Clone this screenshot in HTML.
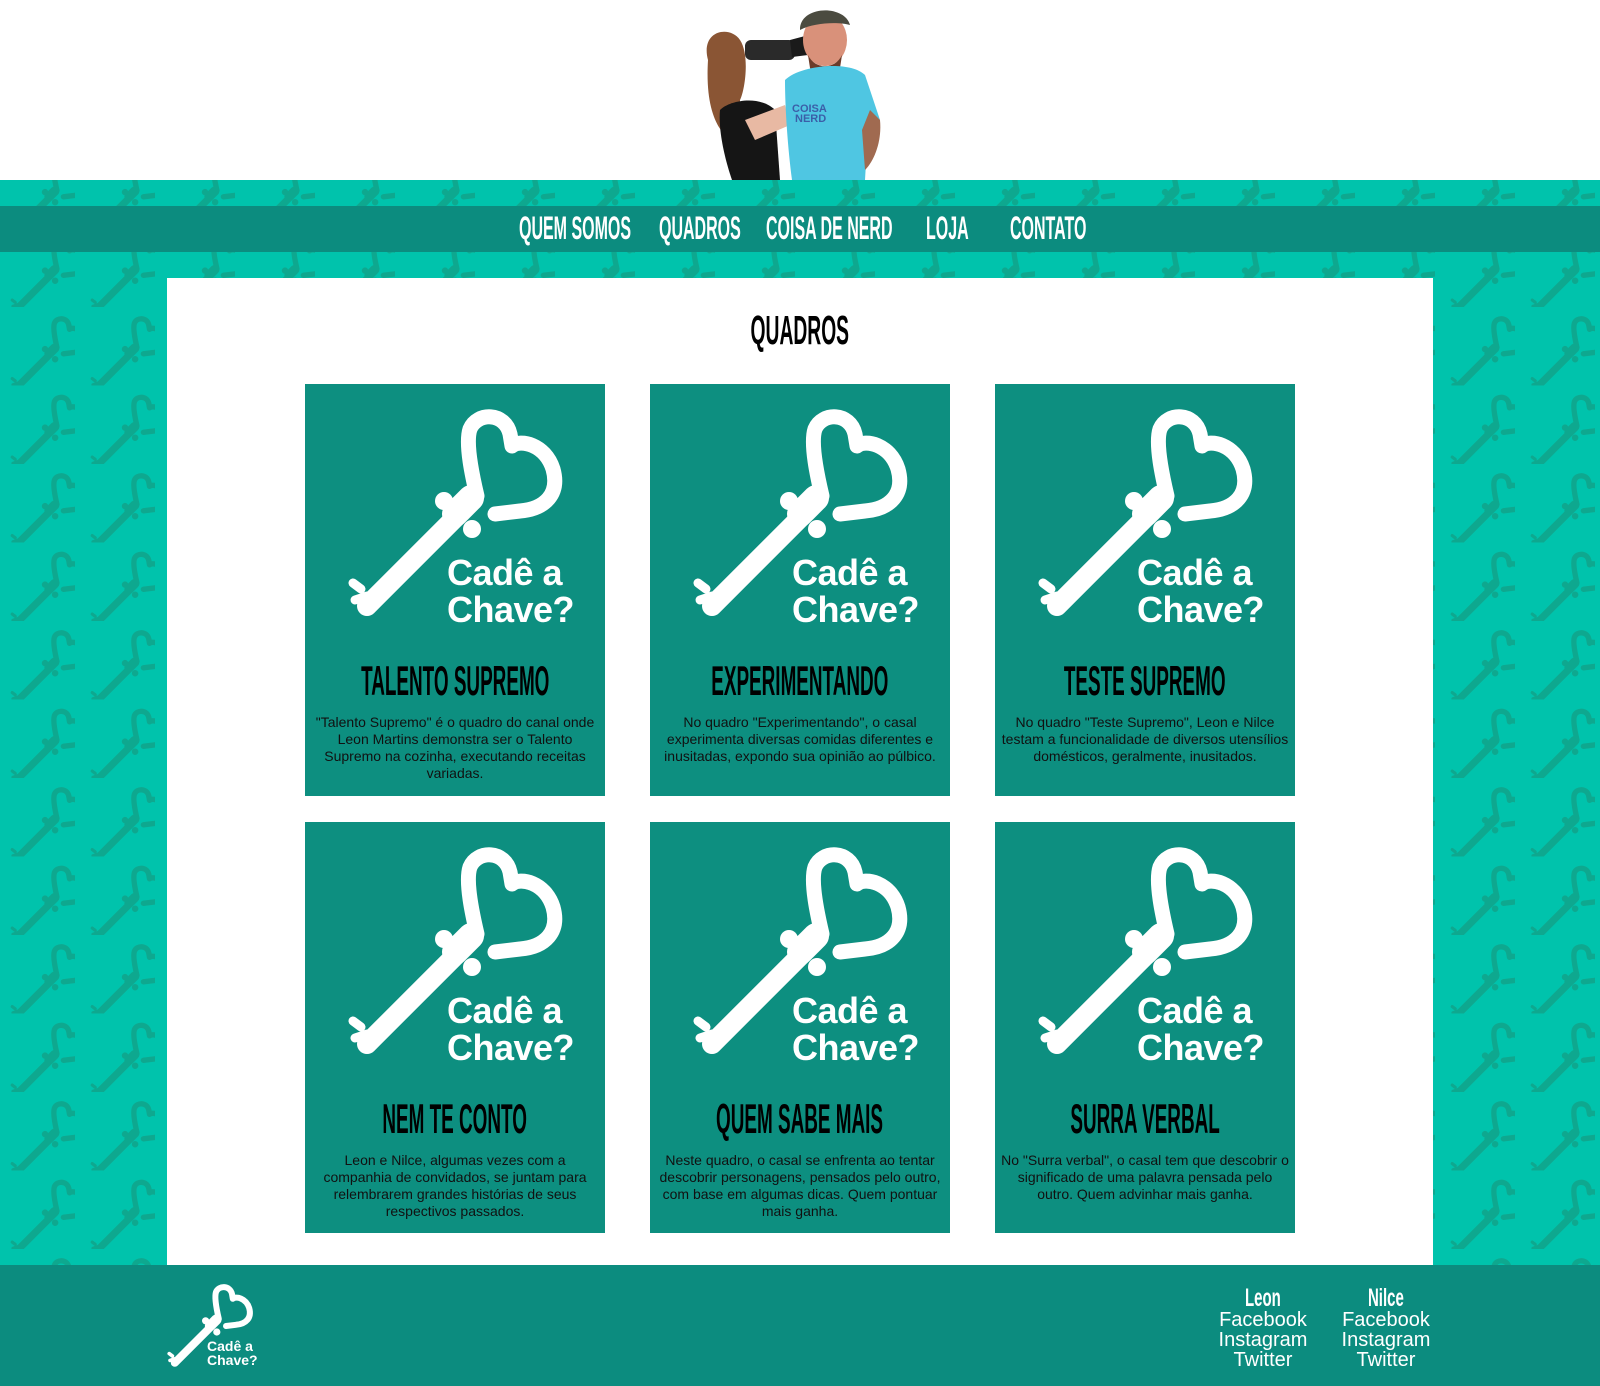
<!DOCTYPE html>
<html><head><meta charset="utf-8">
<style>
*{margin:0;padding:0;box-sizing:border-box}
body{width:1600px;height:1386px;position:relative;overflow:hidden;background:#fff;font-family:"Liberation Sans",sans-serif}
.abs{position:absolute}
.cond{display:inline-block;font-weight:bold;white-space:nowrap}
.nav span{position:absolute;top:212px;color:#fff;font-size:32px;line-height:32px;transform-origin:left top;transform:scaleX(.5);font-weight:bold;white-space:nowrap}
.card{position:absolute;width:300px;background:#0d8f80}
.card svg{position:absolute;left:0;top:0}
.card .ct{position:absolute;left:142px;top:170px;color:#fff;font-size:36px;line-height:37px;font-weight:bold;letter-spacing:-.5px}
.card h2{position:absolute;left:-200px;width:700px;top:276px;text-align:center;font-size:42px;line-height:42px;color:#000}
.card h2 span{display:inline-block;transform:scaleX(.45);white-space:nowrap}
.card p{position:absolute;left:4px;width:292px;top:330px;text-align:center;font-size:14px;line-height:17px;color:#111}
.ft{position:absolute;color:#fff;text-align:center;font-size:20px;line-height:20px;width:120px}
.ft b{display:inline-block;transform:scaleX(.6);font-size:25px}
</style></head><body>
<svg width="0" height="0" style="position:absolute">
<defs>
<g id="key">
<path d="M62 222 L168 116" stroke="currentColor" stroke-width="20" stroke-linecap="round" fill="none"/>
<path d="M56 205 l-8 -6 M62 212 l-12 4" stroke="currentColor" stroke-width="9" stroke-linecap="round"/>
<circle cx="139" cy="117" r="9" fill="currentColor"/>
<circle cx="167" cy="145" r="9" fill="currentColor"/>
<path d="M150 130 l16 -16" stroke="currentColor" stroke-width="26" stroke-linecap="round"/>
<path d="M172 112 C168 95 160 60 165 45 C172 28 200 28 205 50 L207 62 C215 55 240 60 248 85 C255 110 240 125 215 127 L190 130" stroke="currentColor" stroke-width="15" fill="none" stroke-linejoin="round" stroke-linecap="round"/>
</g>
<pattern id="pat" width="80" height="78.5" patternUnits="userSpaceOnUse" x="-5" y="-30">
<g transform="scale(.36)" color="#0ea88f"><use href="#key"/></g>
</pattern>
</defs>
</svg>

<svg class="abs" style="left:690px;top:0" width="220" height="180">
<path d="M18 60 C10 30 40 25 50 40 C60 55 55 90 50 100 L50 135 L40 140 C28 130 15 110 18 60Z" fill="#8a5534"/>
<path d="M30 110 C40 100 70 95 85 110 L90 180 L42 180 C35 160 28 130 30 110Z" fill="#151515"/>
<path d="M55 120 L95 105 L100 125 L65 140Z" fill="#e8b9a3"/>
<rect x="55" y="40" width="50" height="20" rx="6" fill="#2a2a2a"/>
<path d="M100 40 L115 36 L118 55 L102 57Z" fill="#1a1a1a"/>
<ellipse cx="135" cy="40" rx="22" ry="26" fill="#d9917a"/>
<path d="M110 28 C112 5 155 5 160 25 C150 22 125 22 110 30Z" fill="#4b4b40"/>
<path d="M118 55 C125 70 145 70 152 55 L150 68 C140 75 125 75 120 68Z" fill="#6b3c2a"/>
<path d="M95 80 C110 65 160 60 175 75 L190 120 L178 128 L175 180 L102 180 C98 150 95 110 95 80Z" fill="#4fc6e2"/>
<path d="M180 110 L190 120 C192 140 185 160 175 170 L172 130Z" fill="#a06a50"/>
<text x="102" y="112" font-size="11" font-weight="bold" fill="#3b5fa8" font-family="Liberation Sans">COISA</text>
<text x="105" y="122" font-size="11" font-weight="bold" fill="#3b5fa8" font-family="Liberation Sans">NERD</text>
</svg>

<div class="abs" style="left:0;top:180px;width:1600px;height:1085px;background:#00c3ac"></div>
<svg class="abs" style="left:0;top:180px" width="1600" height="1085"><rect width="1600" height="1085" fill="url(#pat)"/></svg>

<div class="abs" style="left:0;top:206px;width:1600px;height:46px;background:#0c8c7f"></div>
<div class="nav">
<span style="left:519px">QUEM SOMOS</span>
<span style="left:659px">QUADROS</span>
<span style="left:766px">COISA DE NERD</span>
<span style="left:926px">LOJA</span>
<span style="left:1010px">CONTATO</span>
</div>

<div class="abs" style="left:167px;top:278px;width:1266px;height:987px;background:#fff"></div>
<div class="abs" style="left:0;top:310px;width:1600px;text-align:center;font-size:41px;line-height:41px;color:#000"><span class="cond" style="transform:scaleX(.47)">QUADROS</span></div>

<div class="card" style="left:305px;top:384px;height:412px">
<svg width="300" height="260" color="#fff"><use href="#key"/></svg>
<div class="ct">Cadê a<br>Chave?</div>
<h2><span>TALENTO SUPREMO</span></h2>
<p>"Talento Supremo" é o quadro do canal onde Leon Martins demonstra ser o Talento Supremo na cozinha, executando receitas variadas.</p>
</div>
<div class="card" style="left:650px;top:384px;height:412px">
<svg width="300" height="260" color="#fff"><use href="#key"/></svg>
<div class="ct">Cadê a<br>Chave?</div>
<h2><span>EXPERIMENTANDO</span></h2>
<p>No quadro "Experimentando", o casal experimenta diversas comidas diferentes e inusitadas, expondo sua opinião ao púlbico.</p>
</div>
<div class="card" style="left:995px;top:384px;height:412px">
<svg width="300" height="260" color="#fff"><use href="#key"/></svg>
<div class="ct">Cadê a<br>Chave?</div>
<h2><span>TESTE SUPREMO</span></h2>
<p>No quadro "Teste Supremo", Leon e Nilce testam a funcionalidade de diversos utensílios domésticos, geralmente, inusitados.</p>
</div>
<div class="card" style="left:305px;top:822px;height:411px">
<svg width="300" height="260" color="#fff"><use href="#key"/></svg>
<div class="ct">Cadê a<br>Chave?</div>
<h2><span>NEM TE CONTO</span></h2>
<p>Leon e Nilce, algumas vezes com a companhia de convidados, se juntam para relembrarem grandes histórias de seus respectivos passados.</p>
</div>
<div class="card" style="left:650px;top:822px;height:411px">
<svg width="300" height="260" color="#fff"><use href="#key"/></svg>
<div class="ct">Cadê a<br>Chave?</div>
<h2><span>QUEM SABE MAIS</span></h2>
<p>Neste quadro, o casal se enfrenta ao tentar descobrir personagens, pensados pelo outro, com base em algumas dicas. Quem pontuar mais ganha.</p>
</div>
<div class="card" style="left:995px;top:822px;height:411px">
<svg width="300" height="260" color="#fff"><use href="#key"/></svg>
<div class="ct">Cadê a<br>Chave?</div>
<h2><span>SURRA VERBAL</span></h2>
<p>No "Surra verbal", o casal tem que descobrir o significado de uma palavra pensada pelo outro. Quem advinhar mais ganha.</p>
</div>

<div class="abs" style="left:0;top:1265px;width:1600px;height:121px;background:#0c8c7f"></div>
<svg class="abs" style="left:150px;top:1274px" width="120" height="110" color="#fff"><g transform="scale(.4)"><use href="#key"/></g></svg>
<div class="abs" style="left:207px;top:1339px;color:#fff;font-size:14px;line-height:14px;font-weight:bold">Cadê a<br>Chave?</div>
<div class="ft" style="left:1203px;top:1288px"><b>Leon</b><br>Facebook<br>Instagram<br>Twitter</div>
<div class="ft" style="left:1326px;top:1288px"><b>Nilce</b><br>Facebook<br>Instagram<br>Twitter</div>
</body></html>
